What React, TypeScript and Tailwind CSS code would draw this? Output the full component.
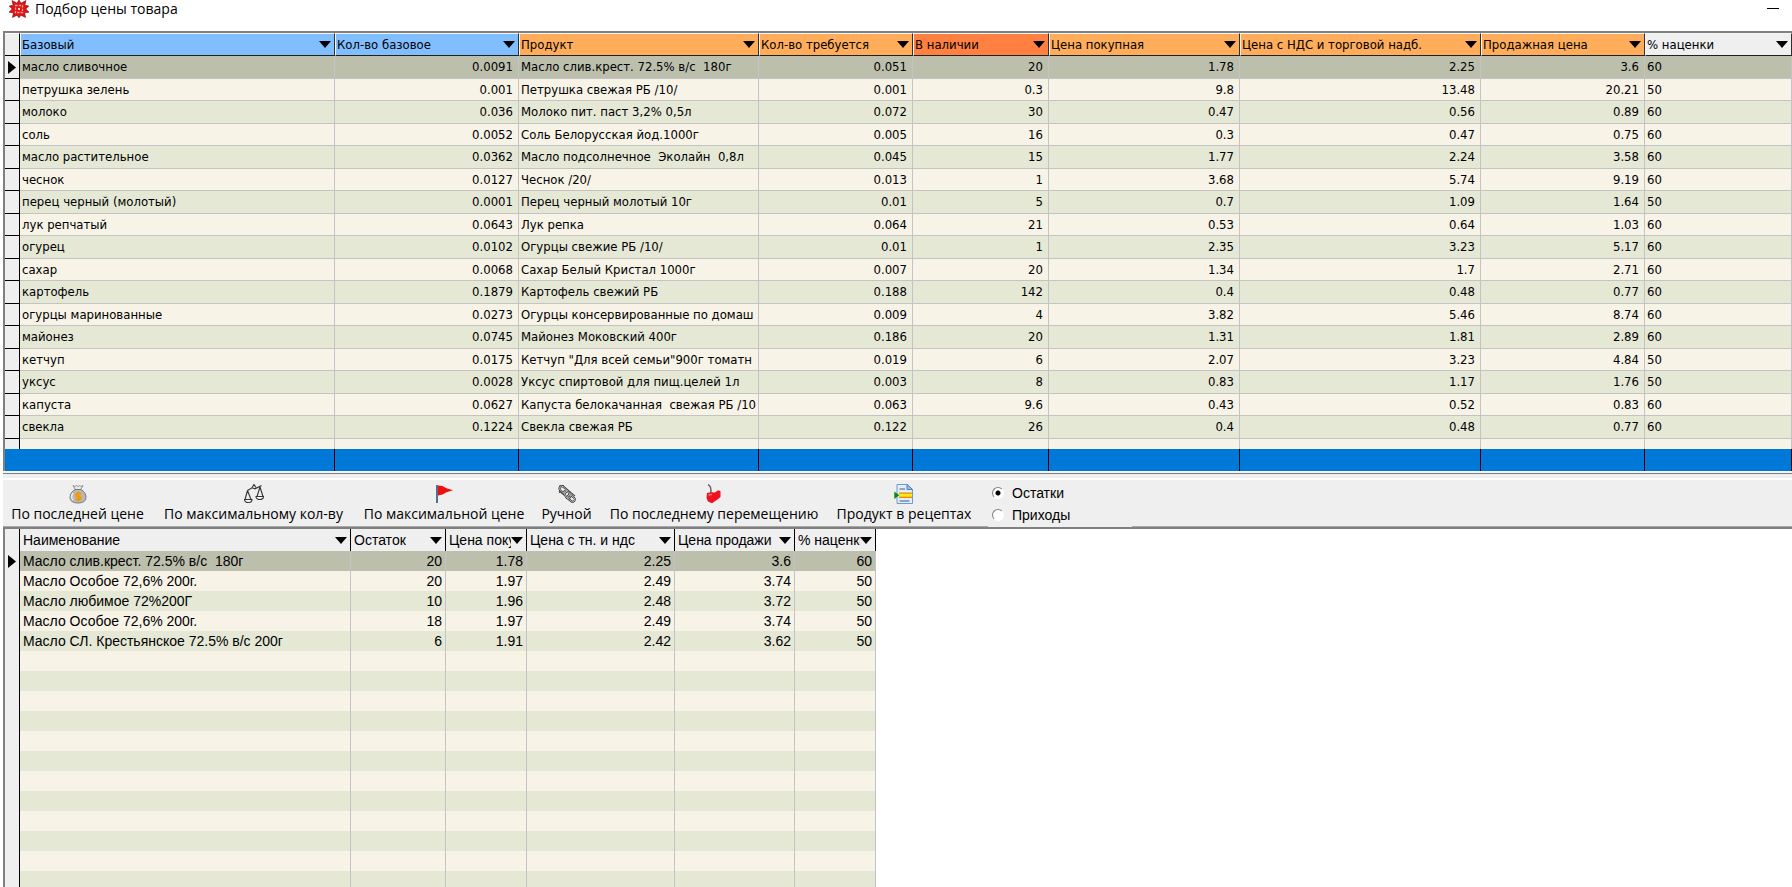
import type { ReactNode } from "react";

type Column = { title: string; width: string; tone: string; align: string };

const priceColumns: Column[] = [
  { title: "Базовый", width: "w-[315px]", tone: "bg-[#80beff]", align: "text-left" },
  { title: "Кол-во базовое", width: "w-[184px]", tone: "bg-[#80beff]", align: "text-right" },
  { title: "Продукт", width: "w-[240px]", tone: "bg-[#ffad5b]", align: "text-left" },
  { title: "Кол-во требуется", width: "w-[154px]", tone: "bg-[#ffad5b]", align: "text-right" },
  { title: "В наличии", width: "w-[136px]", tone: "bg-[#ff8040]", align: "text-right" },
  { title: "Цена покупная", width: "w-[191px]", tone: "bg-[#ffad5b]", align: "text-right" },
  { title: "Цена с НДС и торговой надб.", width: "w-[241px]", tone: "bg-[#ffad5b]", align: "text-right" },
  { title: "Продажная цена", width: "w-[164px]", tone: "bg-[#ffad5b]", align: "text-right" },
  { title: "% наценки", width: "", tone: "bg-[#efefef]", align: "text-left" },
];

const priceRows: string[][] = [
  ["масло сливочное", "0.0091", "Масло слив.крест. 72.5% в/с  180г", "0.051", "20", "1.78", "2.25", "3.6", "60"],
  ["петрушка зелень", "0.001", "Петрушка свежая РБ /10/", "0.001", "0.3", "9.8", "13.48", "20.21", "50"],
  ["молоко", "0.036", "Молоко пит. паст 3,2% 0,5л", "0.072", "30", "0.47", "0.56", "0.89", "60"],
  ["соль", "0.0052", "Соль Белорусская йод.1000г", "0.005", "16", "0.3", "0.47", "0.75", "60"],
  ["масло растительное", "0.0362", "Масло подсолнечное  Эколайн  0,8л", "0.045", "15", "1.77", "2.24", "3.58", "60"],
  ["чеснок", "0.0127", "Чеснок /20/", "0.013", "1", "3.68", "5.74", "9.19", "60"],
  ["перец черный (молотый)", "0.0001", "Перец черный молотый 10г", "0.01", "5", "0.7", "1.09", "1.64", "50"],
  ["лук репчатый", "0.0643", "Лук репка", "0.064", "21", "0.53", "0.64", "1.03", "60"],
  ["огурец", "0.0102", "Огурцы свежие РБ /10/", "0.01", "1", "2.35", "3.23", "5.17", "60"],
  ["сахар", "0.0068", "Сахар Белый Кристал 1000г", "0.007", "20", "1.34", "1.7", "2.71", "60"],
  ["картофель", "0.1879", "Картофель свежий РБ", "0.188", "142", "0.4", "0.48", "0.77", "60"],
  ["огурцы маринованные", "0.0273", "Огурцы консервированные по домаш", "0.009", "4", "3.82", "5.46", "8.74", "60"],
  ["майонез", "0.0745", "Майонез Моковский 400г", "0.186", "20", "1.31", "1.81", "2.89", "60"],
  ["кетчуп", "0.0175", "Кетчуп \"Для всей семьи\"900г томатн", "0.019", "6", "2.07", "3.23", "4.84", "50"],
  ["уксус", "0.0028", "Уксус спиртовой для пищ.целей 1л", "0.003", "8", "0.83", "1.17", "1.76", "50"],
  ["капуста", "0.0627", "Капуста белокачанная  свежая РБ /10", "0.063", "9.6", "0.43", "0.52", "0.83", "60"],
  ["свекла", "0.1224", "Свекла свежая РБ", "0.122", "26", "0.4", "0.48", "0.77", "60"],
];

const stockColumns = [
  { title: "Наименование", width: "w-[331px]", align: "text-left" },
  { title: "Остаток", width: "w-[95px]", align: "text-right" },
  { title: "Цена покупки", width: "w-[81px]", align: "text-right" },
  { title: "Цена с тн. и ндс", width: "w-[148px]", align: "text-right" },
  { title: "Цена продажи", width: "w-[120px]", align: "text-right" },
  { title: "% наценки", width: "w-[81px]", align: "text-right" },
];

const stockRows: string[][] = [
  ["Масло слив.крест. 72.5% в/с  180г", "20", "1.78", "2.25", "3.6", "60"],
  ["Масло Особое 72,6% 200г.", "20", "1.97", "2.49", "3.74", "50"],
  ["Масло любимое 72%200Г", "10", "1.96", "2.48", "3.72", "50"],
  ["Масло Особое 72,6% 200г.", "18", "1.97", "2.49", "3.74", "50"],
  ["Масло СЛ. Крестьянское 72.5% в/с 200г", "6", "1.91", "2.42", "3.62", "50"],
];

const emptyStockRows = Array.from({ length: 12 }, (_, i) => i);

function rowTone(index: number) {
  if (index === 0) return "bg-[#bdbfad]";
  return index % 2 === 1 ? "bg-[#f7f3e7]" : "bg-[#e6e8d6]";
}

function DropArrow() {
  return (
    <svg aria-hidden="true" className="h-[7px] w-3 shrink-0" viewBox="0 0 12 7">
      <path d="M0 0h12L6 7z" fill="#000" />
    </svg>
  );
}

function RowPointer() {
  return (
    <svg aria-hidden="true" className="ml-[3px] block h-[13px] w-2" viewBox="0 0 8 13">
      <path d="M0 0l8 6.500L0 13z" fill="#000" />
    </svg>
  );
}

function AppIcon() {
  return (
    <svg aria-hidden="true" className="h-[18px] w-5 shrink-0" viewBox="0 0 20 18">
      <path d="M10 0l2 3.200 5-2.600-1.200 4.600 4 .8-3 3 3.200 3.200-4.400.6.900 4.600-4.500-2.200-2 2.600-2-2.600-4.500 2.200.9-4.600-4.400-.6L3.200 9l-3-3 4-.8L3 .6l5 2.600z" fill="#e01414" stroke="#7c0a0a" strokeWidth=".6" />
      <rect x="6.500" y="5.500" width="7" height="7" fill="none" stroke="#ff9a9a" strokeWidth="1.300" strokeDasharray="2.200 1.200" />
      <rect x="9" y="8" width="2" height="2" fill="#ffd4d4" />
    </svg>
  );
}

function MoneyBagIcon() {
  return (
    <svg aria-hidden="true" className="h-5 w-5" viewBox="0 0 20 20">
      <path d="M5 1.500l2 1 1.500-1L10 2.500l1.500-1 1.500 1 2-1-2.300 4H7.300z" fill="#e8e8e8" stroke="#8b8b8b" strokeWidth=".9" />
      <path d="M7 5.500h6c3 2 5 4.500 5 7.800 0 3.700-3 5.700-8 5.700s-8-2-8-5.700c0-3.300 2-5.800 5-7.800z" fill="#b9b9b9" stroke="#777" />
      <path d="M5 9c-1.500 2-1.800 5 0 7" fill="none" stroke="#eee" strokeWidth="1.400" />
      <ellipse cx="10.300" cy="12.500" rx="4" ry="4.800" fill="#cfae74" />
      <path d="M12.600 10c-.6-1-4.400-1.300-4.400.8 0 2 4.400 1.200 4.400 3.300 0 2-3.800 1.800-4.800.6M10.300 7.800v9.400" fill="none" stroke="#f09a00" strokeWidth="1.600" />
    </svg>
  );
}

function ScalesIcon() {
  return (
    <svg aria-hidden="true" className="h-5 w-5" viewBox="0 0 20 20">
      <g fill="none" stroke="#333" strokeWidth="1.100">
        <path d="M3.500 6.500L8 3.800l3 1L17.500 1.500M8 3.800l2-3.300 2 3M3.500 6.500L1 15.500M3.500 6.500l3.500 9M16 3l-3 9.500M16 3l3 9.500" />
        <path d="M.5 15.500h7.500c0 4-7.500 4-7.500 0zM12 12.500h7.500c0 4-7.500 4-7.500 0z" fill="#fff" />
      </g>
    </svg>
  );
}

function FlagIcon() {
  return (
    <svg aria-hidden="true" className="h-5 w-5" viewBox="0 0 20 20">
      <path d="M3 1v18" stroke="#54708a" strokeWidth="2" />
      <path d="M4 1.500l4.500.5 4 2.200 6.500 2.100-6.500 1.900L8.500 10.500 4 11.500z" fill="#f40d0d" />
    </svg>
  );
}

function ChainIcon() {
  return (
    <svg aria-hidden="true" className="h-5 w-5" viewBox="0 0 20 20">
      <g fill="none">
        <path d="M2 2l5-.5M2 7l14 11M6 2l12 10M3 3l-.5 6" stroke="#555" strokeWidth="1.200" />
        <g stroke="#3c3c3c" strokeWidth="2">
          <rect x="1.500" y="3.500" width="8" height="4.500" rx="2.200" transform="rotate(40 6 6.500)" />
          <rect x="6" y="8" width="8" height="4.500" rx="2.200" transform="rotate(62 10 10.500)" />
          <rect x="10" y="12" width="8" height="4.500" rx="2.200" transform="rotate(40 14 14.500)" />
        </g>
        <g stroke="#c9c9c9" strokeWidth=".8">
          <rect x="1.500" y="3.500" width="8" height="4.500" rx="2.200" transform="rotate(40 6 6.500)" />
          <rect x="6" y="8" width="8" height="4.500" rx="2.200" transform="rotate(62 10 10.500)" />
          <rect x="10" y="12" width="8" height="4.500" rx="2.200" transform="rotate(40 14 14.500)" />
        </g>
      </g>
    </svg>
  );
}

function CherryIcon() {
  return (
    <svg aria-hidden="true" className="h-5 w-5" viewBox="0 0 20 20">
      <path d="M4 .8c3 .8 3.200 4.500 2.800 8.500" fill="none" stroke="#666" strokeWidth="1.500" />
      <path d="M3 9l4-.8 4 .3 3-2.300 2.500.8v6l-3 2.500-5.500 3.700-4-1.700L2.500 14z" fill="#ef1020" />
      <path d="M4.500 11l3.500-.6" stroke="#ff7a7a" strokeWidth="1.400" />
    </svg>
  );
}

function RecipeIcon() {
  return (
    <svg aria-hidden="true" className="h-5 w-5" viewBox="0 0 20 20">
      <path d="M3 .5h10l5.500 5v14H3z" fill="#e3eefc" stroke="#6f97d4" />
      <path d="M13 .5v5h5.500z" fill="#9fc0ef" stroke="#4d7cc7" />
      <path d="M5.500 5h5.500M5.500 17h10" stroke="#7c8ca8" strokeWidth="1.300" />
      <rect x="5" y="8.500" width="13" height="5.500" fill="#e58a00" />
      <path d="M5 11.200h13" stroke="#ffe81f" strokeWidth="3" />
      <path d="M.3 7.500l5 3.700-5 3.800z" fill="#0a8a12" />
    </svg>
  );
}

function ToolButton({ icon, label, width }: { icon: ReactNode; label: string; width: string }) {
  return (
    <button type="button" className={`flex shrink-0 flex-col items-center whitespace-nowrap pt-1 ${width}`}>
      {icon}
      <span className="text-[14px] leading-5">{label}</span>
    </button>
  );
}

function SourceRadio({ label, checked }: { label: string; checked?: boolean }) {
  return (
    <label className="flex items-center gap-2">
      <input
        type="radio"
        name="source"
        defaultChecked={checked}
        className="h-3 w-3 appearance-none rounded-full border border-t-[#808080] border-r-white border-b-white border-l-[#808080] bg-white checked:bg-[radial-gradient(circle,#000_0,#000_2px,#fff_3px)]"
      />
      <span className="leading-[22px]">{label}</span>
    </label>
  );
}

function PriceTable() {
  return (
    <table className="w-full table-fixed border-separate border-spacing-0 font-['DejaVu_Sans_Condensed','DejaVu_Sans',sans-serif] text-[13px] leading-5">
      <colgroup>
        <col className="w-[15px]" />
        {priceColumns.map((c) => (
          <col key={c.title} className={c.width} />
        ))}
      </colgroup>
      <thead>
        <tr className="h-[23px]">
          <td className="border-t border-r border-b border-t-white border-r-black border-b-black bg-[#efefef] p-0" />
          {priceColumns.map((c) => (
            <th key={c.title} scope="col" className={`overflow-hidden border border-t-[#f4f4f4] border-r-[#303030] border-b-[#202020] border-l-[#f4f4f4] p-0 font-normal ${c.tone}`}>
              <button type="button" className="flex w-full items-center pr-[3px] pl-px">
                <span className="min-w-0 flex-1 overflow-hidden text-left whitespace-nowrap">{c.title}</span>
                <DropArrow />
              </button>
            </th>
          ))}
        </tr>
      </thead>
      <tbody>
        {priceRows.map((row, i) => (
          <tr key={row[0]} className={`odd:h-[23px] even:h-[22px] ${rowTone(i)}`}>
            <td className="border-r border-b border-black bg-[#efefef] p-0">{i === 0 && <RowPointer />}</td>
            {row.map((value, c) => (
              <td key={priceColumns[c].title} className={`overflow-hidden border-r border-b border-[#c3c3c3] py-0 pr-[5px] pl-[2px] whitespace-pre ${priceColumns[c].align}`}>
                {value}
              </td>
            ))}
          </tr>
        ))}
        <tr className="h-[10px] bg-[#f7f3e7]">
          <td className="border-r border-black bg-[#efefef] p-0" />
          {priceColumns.map((c) => (
            <td key={c.title} className="border-r border-[#c3c3c3] p-0" />
          ))}
        </tr>
      </tbody>
      <tfoot>
        <tr className="h-[22px] bg-[#0078d7]">
          <td className="p-0" />
          {priceColumns.map((c) => (
            <td key={c.title} className="border-r border-black p-0" />
          ))}
        </tr>
      </tfoot>
    </table>
  );
}

function StockTable() {
  return (
    <table className="w-[871px] table-fixed border-separate border-spacing-0 text-[14px] leading-5">
      <colgroup>
        <col className="w-[15px]" />
        {stockColumns.map((c) => (
          <col key={c.title} className={c.width} />
        ))}
      </colgroup>
      <thead>
        <tr className="h-[22px] bg-[#efefef]">
          <td className="border-r border-black p-0" />
          {stockColumns.map((c) => (
            <th key={c.title} scope="col" className="overflow-hidden border-r border-black p-0 font-normal">
              <button type="button" className="flex w-full items-center pr-[3px] pl-[3px]">
                <span className="min-w-0 flex-1 overflow-hidden text-left whitespace-nowrap">{c.title}</span>
                <DropArrow />
              </button>
            </th>
          ))}
        </tr>
      </thead>
      <tbody>
        {stockRows.map((row, i) => (
          <tr key={i} className={`h-5 ${rowTone(i)}`}>
            <td className="border-r border-black bg-[#efefef] p-0">{i === 0 && <RowPointer />}</td>
            {row.map((value, c) => (
              <td key={stockColumns[c].title} className={`overflow-hidden border-r border-[#c3c3c3] py-0 pr-[3px] pl-[3px] whitespace-pre ${stockColumns[c].align}`}>
                {value}
              </td>
            ))}
          </tr>
        ))}
        {emptyStockRows.map((i) => (
          <tr key={i} className="h-5 odd:bg-[#e6e8d6] even:bg-[#f7f3e7]">
            <td className="border-r border-black bg-[#efefef] p-0" />
            {stockColumns.map((c) => (
              <td key={c.title} className="border-r border-[#c3c3c3] p-0" />
            ))}
          </tr>
        ))}
      </tbody>
    </table>
  );
}

export default function App() {
  return (
    <div className="flex h-screen flex-col overflow-hidden bg-white pl-[3px] font-['Liberation_Sans',Arial,sans-serif] text-black">
      <header className="flex h-[31px] shrink-0 items-start justify-between pr-[13px] pl-[6px]">
        <div className="flex items-center gap-[6px]">
          <AppIcon />
          <h1 className="font-['Open_Sans','Noto_Sans',sans-serif] text-[14px] leading-[18px]">Подбор цены товара</h1>
        </div>
        <button type="button" aria-label="Свернуть" className="flex h-[17px] w-3 items-center">
          <span className="h-px w-full bg-black" />
        </button>
      </header>

      <section className="shrink-0 border-t-2 border-l-2 border-[#808080]">
        <PriceTable />
      </section>
      <div className="h-[7px] shrink-0 border-t-2 border-[#f4f4f4] bg-[#efefef]">
        <div className="h-px bg-[#808080]" />
      </div>

      <div className="mt-[2px] flex h-[46px] shrink-0 bg-[#efefef] font-['Open_Sans','Noto_Sans',sans-serif]">
        <ToolButton icon={<MoneyBagIcon />} label="По последней цене" width="w-[149px]" />
        <ToolButton icon={<ScalesIcon />} label="По максимальному кол-ву" width="w-[203px]" />
        <ToolButton icon={<FlagIcon />} label="По максимальной цене" width="w-[178px]" />
        <ToolButton icon={<ChainIcon />} label="Ручной" width="w-[67px]" />
        <ToolButton icon={<CherryIcon />} label="По последнему перемещению" width="w-[228px]" />
        <ToolButton icon={<RecipeIcon />} label="Продукт в рецептах" width="w-[152px]" />
        <fieldset className="relative z-10 -mb-px ml-2 flex w-[144px] flex-col bg-[#efefef] pt-[2px] pl-1 font-['Liberation_Sans',Arial,sans-serif] text-[14px]">
          <SourceRadio label="Остатки" checked />
          <SourceRadio label="Приходы" />
        </fieldset>
      </div>

      <section className="min-h-0 flex-1 overflow-hidden border-t border-[#a8a8a8]">
        <div className="border-t-2 border-l-2 border-[#808080]">
          <StockTable />
        </div>
      </section>
    </div>
  );
}
